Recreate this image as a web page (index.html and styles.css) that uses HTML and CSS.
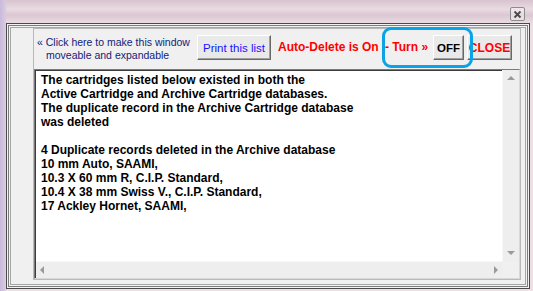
FILE: index.html
```html
<!DOCTYPE html>
<html lang="en">
<head>
  <meta charset="UTF-8">
  <title>Duplicate Cartridges</title>
  <link rel="stylesheet" href="styles.css">
</head>
<body>
  <div class="topbar">
    <span class="xbtn">
      <svg width="9" height="9" viewBox="0 0 9 9">
        <path d="M1.5 1.5 L7.5 7.5 M7.5 1.5 L1.5 7.5" stroke="#4a4a4a" stroke-width="1.8"/>
      </svg>
    </span>
  </div>

  <div class="dialog">
    <div class="panel">
      <div class="toolbar">
        <div class="hint">« Click here to make this window<br>moveable and expandable</div>
        <button class="btn print">Print this list</button>
        <span class="status">Auto-Delete is On</span>
        <span class="turn">- Turn »</span>
        <button class="btn off">OFF</button>
        <button class="btn close">CLOSE</button>
        <div class="highlight"></div>
      </div>

      <div class="list">
        <div class="list-text">The cartridges listed below existed in both the
Active Cartridge and Archive Cartridge databases.
The duplicate record in the Archive Cartridge database
was deleted

4 Duplicate records deleted in the Archive database
10 mm Auto, SAAMI,
10.3 X 60 mm R, C.I.P. Standard,
10.4 X 38 mm Swiss V., C.I.P. Standard,
17 Ackley Hornet, SAAMI,</div>
        <div class="vscroll">
          <span class="arr up"></span>
          <span class="arr down"></span>
        </div>
        <div class="hscroll">
          <span class="arr left"></span>
          <span class="arr right"></span>
        </div>
        <div class="corner"></div>
      </div>
    </div>
  </div>
</body>
</html>
```

FILE: styles.css
```css
body {
  margin: 0;
  width: 533px;
  height: 291px;
  overflow: hidden;
  font-family: 'Liberation Sans', Arial, sans-serif;
  background-color: #eddfe4;
  background-image:
    linear-gradient(to right, #c9b9dc 0, #d8c8e0 5px, transparent 7px),
    linear-gradient(to bottom, #d7c3d0 0, #e9dbe1 9px, #dac7d3 15px, #e8d9df 22px, transparent 26px);
}

.topbar {
  height: 23px;
  box-sizing: border-box;
  padding: 7px 8px 0 0;
  display: flex;
  justify-content: flex-end;
}

.xbtn {
  width: 15px;
  height: 14px;
  box-sizing: border-box;
  border: 1px solid #8c8c8c;
  border-radius: 2px;
  background-color: rgba(255, 255, 255, 0.35);
  display: flex;
  align-items: center;
  justify-content: center;
}

.dialog {
  margin-left: 6px;
  width: 524px;
  height: 266px;
  box-sizing: border-box;
  border: 1px solid #4a4a4a;
  box-shadow: inset 0 0 0 1px #f2f2f2, inset 0 0 0 2px #7c7c7c, inset 0 0 0 3px #f2f2f2, inset 0 0 0 4px #a6a6a6;
  background-color: #f0f0f0;
  display: flex;
  flex-direction: column;
  padding: 4px 8px 8px 26px;
}

.panel {
  flex: 1;
  border: 1px solid #b9b9b9;
  display: flex;
  flex-direction: column;
}

.toolbar {
  position: relative;
  height: 40px;
  flex-shrink: 0;
  box-sizing: border-box;
  padding: 6px 0 0 3px;
  display: flex;
  align-items: flex-start;
}

.hint {
  width: 160px;
  flex-shrink: 0;
  margin-top: 1px;
  box-sizing: border-box;
  padding-left: 9px;
  text-indent: -9px;
  white-space: nowrap;
  font-size: 10.5px;
  line-height: 13px;
  color: #14217a;
}

.btn {
  height: 25px;
  padding: 0;
  box-sizing: border-box;
  border: 1px solid;
  border-color: #ffffff #696969 #696969 #ffffff;
  box-shadow: inset -1px -1px 0 #a0a0a0;
  background-color: #e9e9e9;
  font-family: 'Liberation Sans', Arial, sans-serif;
  flex-shrink: 0;
}

.print {
  width: 74px;
  font-size: 11.5px;
  color: #1414ff;
}

.status,
.turn {
  line-height: 25px;
  font-size: 12px;
  font-weight: bold;
  color: #ff0000;
  white-space: nowrap;
  flex-shrink: 0;
}

.status {
  width: 107px;
  margin-left: 7px;
}

.turn {
  width: 48px;
}

.off {
  width: 31px;
  font-size: 11.5px;
  font-weight: bold;
  color: #000000;
}

.close {
  width: 45px;
  margin-left: 3px;
  font-size: 12px;
  font-weight: bold;
  color: #ff0000;
}

.highlight {
  position: absolute;
  left: 348px;
  top: -2px;
  width: 91px;
  height: 41px;
  box-sizing: border-box;
  border: 3px solid #0aa3e6;
  border-radius: 9px;
}

.list {
  flex: 1;
  display: grid;
  grid-template-columns: 1fr 17px;
  grid-template-rows: 1fr 17px;
  border: 1px solid #d8d8d8;
  border-top-color: #7a7a7a;
  border-left-color: #7a7a7a;
  box-shadow: inset 1px 1px 0 #3c3c3c;
  background-color: #ffffff;
}

.list-text {
  padding: 3px 0 0 6px;
  white-space: pre;
  overflow: hidden;
  font-size: 12px;
  font-weight: bold;
  line-height: 14px;
  color: #000000;
}

.vscroll,
.hscroll,
.corner {
  position: relative;
  background-color: #eeeeee;
}

.vscroll {
  border-left: 1px solid #f8f8f8;
}

.hscroll {
  border-top: 1px solid #f8f8f8;
  margin-left: 1px;
}

.corner {
  background-color: #f0f0f0;
}

.arr {
  position: absolute;
  width: 0;
  height: 0;
  border: 4px solid transparent;
}

.up {
  left: 4px;
  top: 6px;
  border-bottom-color: #9a9a9a;
  border-top-width: 0;
}

.down {
  left: 4px;
  bottom: 6px;
  border-top-color: #9a9a9a;
  border-bottom-width: 0;
}

.left {
  left: 4px;
  top: 4px;
  border-right-color: #9a9a9a;
  border-left-width: 0;
}

.right {
  right: 4px;
  top: 4px;
  border-left-color: #9a9a9a;
  border-right-width: 0;
}
```
